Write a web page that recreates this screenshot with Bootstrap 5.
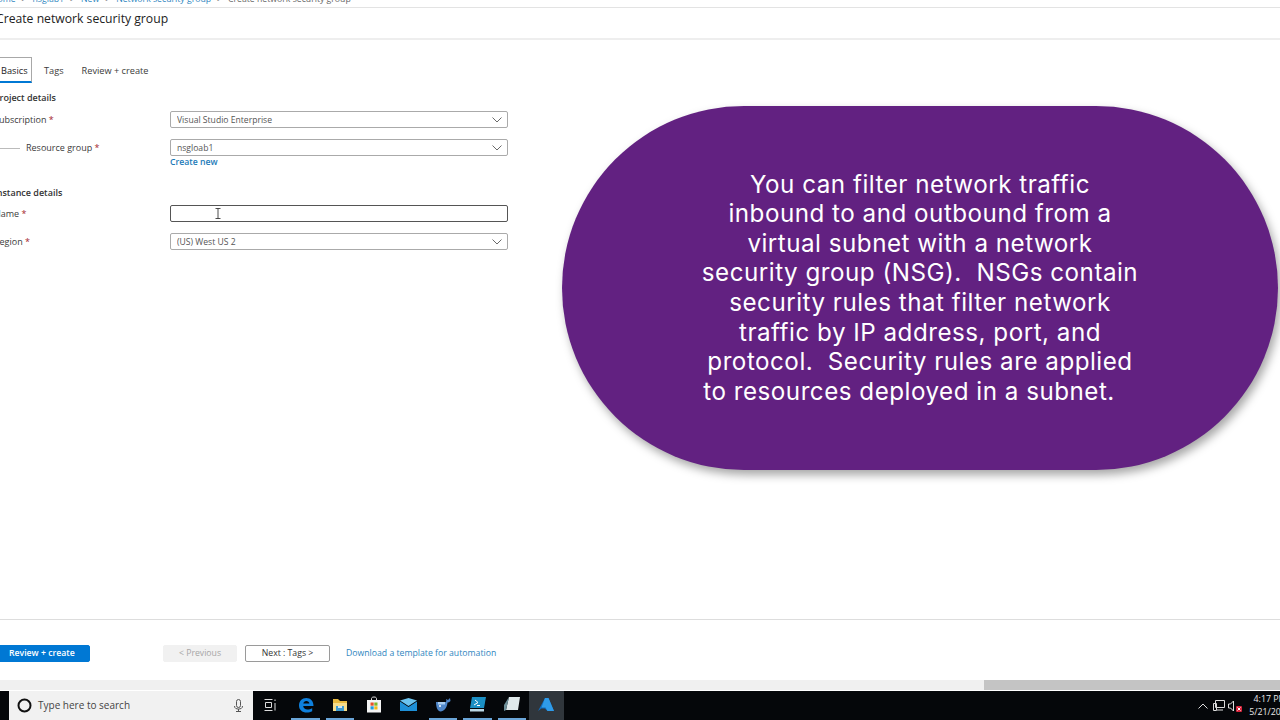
<!DOCTYPE html>
<html lang="en">
<head>
  <meta charset="UTF-8">
  <title>Create network security group</title>
  <link href="https://cdn.jsdelivr.net/npm/bootstrap@5.3.2/dist/css/bootstrap.min.css" rel="stylesheet" />
  <style>
    body {
      width: 1280px;
      height: 720px;
      overflow: hidden;
      font-family: "Open Sans", "Liberation Sans", sans-serif;
      font-size: 8.7px;
      color: #3b3b3b;
      background: #fff;
    }
    .crumbs {
      height: 8px;
      border-bottom: 1px solid #e3e3e3;
      margin-left: -9px;
      line-height: 1;
      overflow: hidden;
      color: #666;
    }
    .crumbs-in { margin-top: -5px; gap: 6px; }
    .crumbs a { color: #2f86c0; text-decoration: none; }
    .blade-head {
      height: 32px;
      border-bottom: 2px solid #eee;
      padding-top: 2px;
      margin-left: -4px;
      font-size: 12.2px;
      color: #222;
    }
    .tabs-bar { margin-top: 17px; height: 26px; gap: 18px; font-size: 9.2px; }
    .tab-on {
      margin-left: -4px;
      margin-right: -6px;
      width: 36px;
      border: 1px solid #a8a8a8;
      border-bottom: 2px solid #0078d4;
      color: #222;
      padding-left: 4px;
      padding-top: 2px;
    }
    .tab-off { padding-top: 2px; }
    .section-h { font-weight: 600; color: #333; margin-left: -6px; line-height: 14px; font-size: 9px; }
    .form-line { height: 17px; }
    .lbl { width: 176px; margin-left: -6px; flex: none; padding-top: 1px; font-size: 9px; }
    .lbl b { color: #a4262c; font-weight: 400; }
    .lbl-sub { margin-left: 0; width: 170px; gap: 6px; }
    .lbl-sub i { display: block; width: 20px; height: 1px; background: #bbb; }
    .az-select, .az-input {
      width: 338px;
      height: 17px;
      min-height: 0;
      padding: 0 6px;
      font-size: 8.6px;
      line-height: 16px;
      border: 1px solid #aaa;
      border-radius: 2px;
      color: #555;
    }
    .az-select {
      background-image: url("data:image/svg+xml,%3csvg xmlns='http://www.w3.org/2000/svg' viewBox='0 0 10 6'%3e%3cpath fill='none' stroke='%23444' stroke-width='.8' d='M.5.5 5 5 9.5.5'/%3e%3c/svg%3e");
      background-size: 10px 6px;
      background-position: right 5px center;
    }
    .az-input { border-color: #555; }
    .cursor-mark { left: 215px; top: 3px; }
    .az-link { color: #1b7ab8; text-decoration: none; }
    .fw-link { font-weight: 600; margin-left: 170px; line-height: 12px; margin-top: 0; }
    .main-area { height: 619px; }
    .foot {
      height: 61px;
      border-top: 1px solid #ddd;
      padding-top: 25px;
    }
    .az-btn {
      height: 17px;
      padding: 0;
      font-size: 8.7px;
      line-height: 15px;
      border-radius: 2px;
    }
    .az-primary { width: 100px; margin-left: -10px; background: #0078d4; border: 1px solid #0078d4; color: #fff; font-weight: 600; padding-left: 18px; text-align: left; }
    .az-prev, .az-prev:disabled { width: 74px; margin-left: 73px; background: #f1f1f1; border: 1px solid #f1f1f1; color: #a6a6a6; opacity: 1; }
    .az-next { width: 85px; margin-left: 8px; background: #fff; border: 1px solid #9a9a9a; color: #333; }
    .foot .az-link { margin-left: 16px; color: #2f86c0; line-height: 17px; }
    .scroll-strip { height: 11px; background: #f0f0f0; border-bottom: 1px solid #fff; }
    .scroll-thumb { width: 296px; background: #c4c4c4; }
    .taskbar { height: 29px; background: #05070a; color: #fff; }
    .search-box {
      width: 244px;
      margin-left: 9px;
      background: #f1f1f1;
      color: #444;
      font-size: 10px;
      padding: 0 10px 0 8px;
      gap: 6px;
    }
    .task-item { width: 34.4px; border-bottom: 2px solid transparent; }
    .task-open { width: 28.4px; margin: 0 3px; border-bottom-color: #6aa5d8; }
    .task-cur { background: #30363c; }
    .task-gap { width: 1px; }
    .tray { color: #e8e8e8; }
    .tray-net { margin-left: 5px; }
    .tray-spk { margin-left: 3px; }
    .clock { font-size: 8.8px; line-height: 13px; width: 42px; white-space: nowrap; text-align: center; margin-left: 7px; margin-right: -11px; }
    .callout {
      position: absolute;
      left: 562px;
      top: 106px;
      width: 716px;
      height: 364px;
      border-radius: 182px;
      background: #622181;
      color: #fff;
      box-shadow: 3px 5px 10px rgba(0, 0, 0, .35);
      font-family: Inter, "Open Sans", sans-serif;
      font-size: 24.2px;
      font-weight: 400;
      line-height: 29.55px;
      letter-spacing: .5px;
      white-space: pre;
      text-align: center;
    }
  </style>
</head>
<body>

<div class="main-area overflow-hidden">
  <div class="crumbs">
    <div class="crumbs-in d-flex">
      <a href="#">Home</a><span>&gt;</span><a href="#">nsglab1</a><span>&gt;</span><a href="#">New</a><span>&gt;</span><a href="#">Network security group</a><span>&gt;</span><span>Create network security group</span>
    </div>
  </div>
  <div class="blade-head">Create network security group</div>

  <div class="tabs-bar d-flex align-items-stretch">
    <div class="tab-on d-flex align-items-center">Basics</div>
    <div class="tab-off d-flex align-items-center">Tags</div>
    <div class="tab-off d-flex align-items-center">Review + create</div>
  </div>

  <div class="section-h mt-2">Project details</div>
  <div class="form-line d-flex align-items-center" style="margin-top:6px">
    <div class="lbl">Subscription <b>*</b></div>
    <select class="form-select az-select"><option>Visual Studio Enterprise</option></select>
  </div>
  <div class="form-line d-flex align-items-center" style="margin-top:11px">
    <div class="lbl lbl-sub d-flex align-items-center"><i></i><span>Resource group <b>*</b></span></div>
    <select class="form-select az-select"><option>nsgloab1</option></select>
  </div>
  <div class="fw-link"><a class="az-link" href="#">Create new</a></div>

  <div class="section-h" style="margin-top:18px">Instance details</div>
  <div class="form-line d-flex align-items-center position-relative" style="margin-top:5px">
    <div class="lbl">Name <b>*</b></div>
    <input class="form-control az-input" type="text">
    <svg class="position-absolute cursor-mark" width="6" height="11" viewBox="0 0 6 11"><path fill="none" stroke="#222" stroke-width=".8" d="M.5.5h5M3 .5v10M.5 10.500h5"/></svg>
  </div>
  <div class="form-line d-flex align-items-center" style="margin-top:11px">
    <div class="lbl">Region <b>*</b></div>
    <select class="form-select az-select"><option>(US) West US 2</option></select>
  </div>
</div>

<div class="callout d-flex align-items-center justify-content-center"><div>You can filter network traffic
inbound to and outbound from a
virtual subnet with a network
security group (NSG).  NSGs contain
security rules that filter network
traffic by IP address, port, and
protocol.  Security rules are applied
to resources deployed in a subnet.   </div></div>

<div class="foot d-flex align-items-start">
  <button class="btn az-btn az-primary">Review + create</button>
  <button class="btn az-btn az-prev" disabled>&lt; Previous</button>
  <button class="btn az-btn az-next">Next : Tags &gt;</button>
  <a class="az-link" href="#">Download a template for automation</a>
</div>

<div class="scroll-strip d-flex justify-content-end">
  <div class="scroll-thumb"></div>
</div>

<div class="taskbar d-flex align-items-stretch">
  <div class="search-box d-flex align-items-center">
    <svg width="15" height="15" viewBox="0 0 15 15"><circle cx="7.5" cy="7.5" r="6" fill="none" stroke="#111" stroke-width="2"/></svg>
    <span class="flex-grow-1">Type here to search</span>
    <svg width="9" height="13" viewBox="0 0 9 13"><rect x="2.5" y=".5" width="4" height="8" rx="2" fill="none" stroke="#555"/><path fill="none" stroke="#555" d="M.5 7c0 2.500 2 3 4 3s4-.5 4-3M4.500 10v2.500M2 12.500h5"/></svg>
  </div>
  <div class="task-item d-flex align-items-center justify-content-center">
    <svg width="13" height="12" viewBox="0 0 13 12"><path fill="none" stroke="#ddd" d="M.5.500h8M.5 11.500h8M1.500 3.500h6v5h-6zM11 .500v1.500M11 4v7.500"/></svg>
  </div>
  <div class="task-gap"></div>
  <div class="task-item task-open d-flex align-items-center justify-content-center">
    <svg width="16" height="16" viewBox="0 0 16 16"><path fill="#0e7fdc" d="M1 8.500C1 4 4 1 8.300 1 12.700 1 15.500 4 15.500 9H5.200c.2 2.300 2 3.500 4.300 3.500 1.700 0 3.200-.5 4.700-1.300v3c-1.600.9-3.500 1.300-5.300 1.300C4 15.500 1 12.800 1 8.500zm4.300-1.900h6.100C11.300 4.900 10 3.900 8.300 3.900c-1.600 0-2.700 1-3 2.700z"/></svg>
  </div>
  <div class="task-item task-open d-flex align-items-center justify-content-center">
    <svg width="16" height="14" viewBox="0 0 16 14"><path fill="#e8b93f" d="M1 1h5l2 2h7v10H1z"/><path fill="#f6dc8a" d="M1 5h14v8H1z"/><path fill="#3f9bd0" d="M4 8h8v5H4z"/><path fill="#cfe6f4" d="M6 8h4v2H6z"/></svg>
  </div>
  <div class="task-item d-flex align-items-center justify-content-center">
    <svg width="16" height="17" viewBox="0 0 16 17"><path fill="none" stroke="#ddd" d="M5.500 4V2.500C5.500 1.500 6.500 1 8 1s2.500.5 2.500 1.500V4"/><path fill="#f4f4f4" d="M1 4h14v12.500H1z"/><path fill="#e8502a" d="M4.500 6.500h3.200v3.200H4.500z"/><path fill="#7eb72a" d="M8.300 6.500h3.200v3.200H8.300z"/><path fill="#1f9be0" d="M4.500 10.300h3.200v3.200H4.500z"/><path fill="#f7b917" d="M8.300 10.300h3.200v3.200H8.300z"/></svg>
  </div>
  <div class="task-item d-flex align-items-center justify-content-center">
    <svg width="17" height="13" viewBox="0 0 17 13"><path fill="#1e90d8" d="M0 3.500 8.500 9 17 3.500V13H0z"/><path fill="#6cc4f0" d="M0 2.500 8.500 0 17 2.500 8.500 8z"/></svg>
  </div>
  <div class="task-item task-open d-flex align-items-center justify-content-center">
    <svg width="17" height="15" viewBox="0 0 17 15"><path fill="#4f86c9" d="M1 5h10c.5-1 .5-2 0-3l2 1 2-2 .5 3c-1 1-2 1.500-3 1.500C12 11 9 14.500 5.500 14.500 3 14.500 1 11 1 5z"/><path fill="#a9cdf0" d="M3 5h7v2.500H3z"/><circle cx="5" cy="9" r="1" fill="#fff"/></svg>
  </div>
  <div class="task-item task-open d-flex align-items-center justify-content-center">
    <svg width="17" height="15" viewBox="0 0 17 15"><path fill="#1b8fc4" d="M3 0h14l-2 11H1z"/><path fill="#bcd9e6" d="M1 12h14v2.500H1z"/><path fill="none" stroke="#fff" d="M6 3l3 2.500L5 8M8 8.500h3"/></svg>
  </div>
  <div class="task-item task-open d-flex align-items-center justify-content-center">
    <svg width="16" height="15" viewBox="0 0 16 15"><path fill="#dfe8ea" d="M5 0h11l-2 13H2z"/><path fill="#6d8f99" d="M0 8 5 0 2 13l-2 1z"/></svg>
  </div>
  <div class="task-item task-cur d-flex align-items-center justify-content-center">
    <svg width="16" height="13" viewBox="0 0 16 13"><path fill="#0f6cbd" d="M7 0h3.500L16 13H9.500l-2.800-2.500H3.500L0 13z"/><path fill="#2f9be8" d="M7 0 3.500 9.500h4l2 3.500H16L10.500 0z"/></svg>
  </div>
  <div class="tray d-flex align-items-center ms-auto">
    <svg width="10" height="6" viewBox="0 0 10 6"><path fill="none" stroke="#ddd" d="M.5 5.500 5 1l4.500 4.500"/></svg>
    <svg class="tray-net" width="12" height="11" viewBox="0 0 12 11"><path fill="none" stroke="#ddd" d="M2.500.500h9v7h-9zM.5 3.500h3v7h-3zM4 10h6"/></svg>
    <svg class="tray-spk" width="14" height="12" viewBox="0 0 14 12"><path fill="none" stroke="#ddd" d="M.5 4h2l3-3v10l-3-3h-2z"/><rect x="8" y="6" width="6" height="6" rx="1" fill="#d8233a"/><path stroke="#fff" d="M9.500 7.500l3 3M12.500 7.500l-3 3"/></svg>
    <div class="clock">4:17 PM<br>5/21/2020</div>
  </div>
</div>

</body>
</html>
